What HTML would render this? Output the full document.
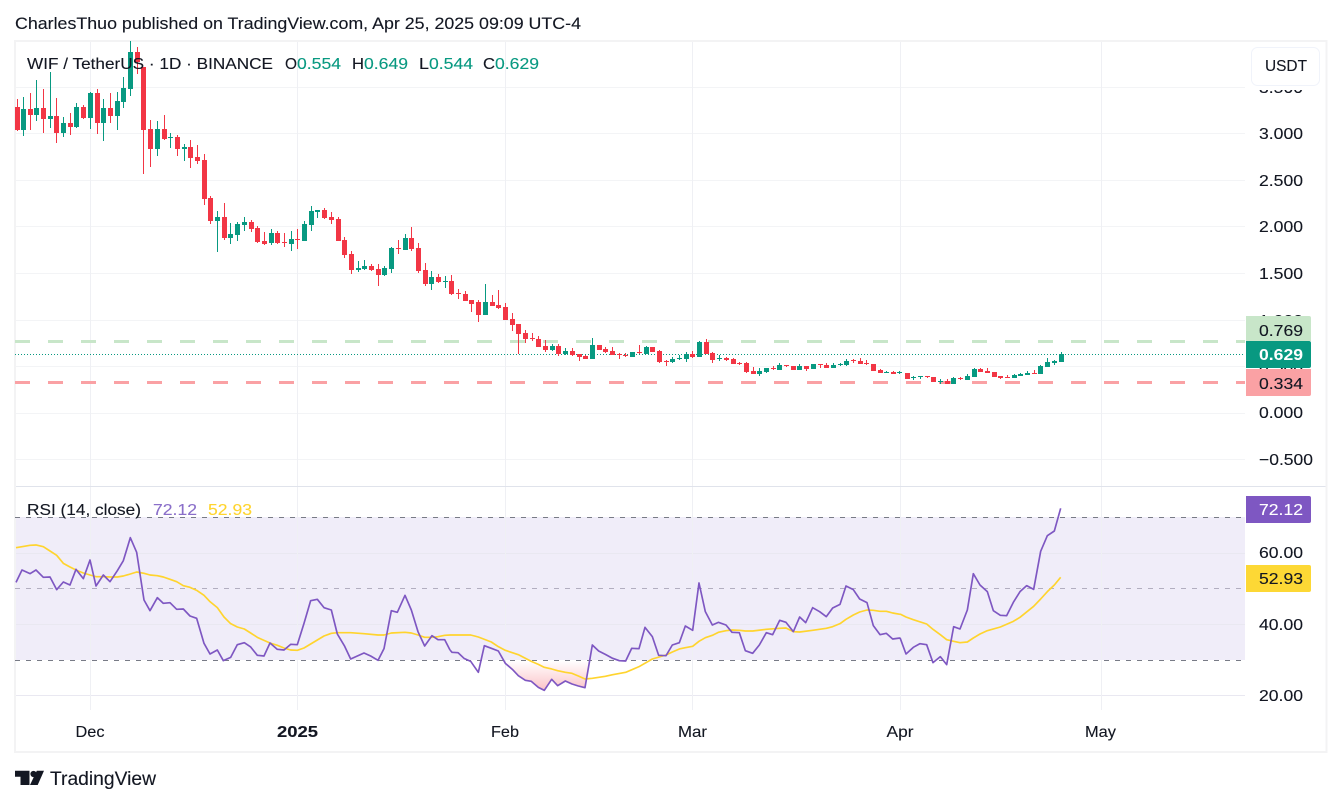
<!DOCTYPE html>
<html><head><meta charset="utf-8"><title>WIF / TetherUS chart</title>
<style>
html,body{margin:0;padding:0;background:#fff;width:1341px;height:805px;overflow:hidden}
svg{display:block}
text{font-family:"Liberation Sans",sans-serif;font-size:16px;fill:#131722;stroke:#131722;stroke-width:.12px}
.g{fill:#089981;stroke:#089981}
</style></head><body>
<svg width="1341" height="805" viewBox="0 0 1341 805" xmlns="http://www.w3.org/2000/svg">
<defs><linearGradient id="pk" x1="0" y1="0" x2="0" y2="1"><stop offset="0" stop-color="#f23645" stop-opacity="0"/><stop offset="1" stop-color="#f23645" stop-opacity=".3"/></linearGradient></defs>
<rect width="1341" height="805" fill="#fff"/>
<text x="15" y="29" style="font-size:17px" textLength="566" lengthAdjust="spacingAndGlyphs">CharlesThuo published on TradingView.com, Apr 25, 2025 09:09 UTC-4</text>

<!-- grid -->
<g shape-rendering="crispEdges">
<rect x="15" y="517" width="1230" height="143" fill="#f0edf9"/>
<path d="M16 87.5H1245M16 133.5H1245M16 180.5H1245M16 226.5H1245M16 273.5H1245M16 320.5H1245M16 366.5H1245M16 413.5H1245M16 459.5H1245" stroke="#f3f4f6" stroke-width="1" fill="none"/>
<path d="M16 553.5H1245M16 624.5H1245M16 695.5H1245" stroke="#e9e8f1" stroke-width="1" fill="none"/>
<path d="M90.5 42V486M297.5 42V486M505.5 42V486M692.5 42V486M900.5 42V486M1101.5 42V486M90.5 487V710M297.5 487V710M505.5 487V710M692.5 487V710M900.5 487V710M1101.5 487V710" stroke="#eff0f4" stroke-width="1" fill="none"/>
<path d="M16 486.5H1326" stroke="#e0e3eb" stroke-width="1"/>
<!-- frame -->
<path d="M15 41H1326.5V752H15Z" fill="none" stroke="#f3f3f4" stroke-width="2"/>
<!-- levels -->
<path d="M15 341.5H1245" stroke="#c8e6c9" stroke-width="3" stroke-dasharray="15 18" fill="none"/>
<path d="M15 382.5H1245" stroke="#faa1a4" stroke-width="3" stroke-dasharray="15 18" fill="none"/>
<path d="M15 354.5H1245" stroke="#089981" stroke-width="1" stroke-dasharray="1 2" fill="none"/>
</g>

<!-- candles -->
<g fill="none" shape-rendering="crispEdges">
<path stroke="#f23645" stroke-width="1" d="M17.5 99V131M30.5 93V130M43.5 89V133M56.5 98V143M70.5 113V135M83.5 105V119M97.5 89V134M110.5 93V123M137.5 47V74M143.5 67V174M150.5 120V167M164.5 115V140M177.5 135V156M190.5 140V168M197.5 145V164M204.5 154V205M210.5 196V224M224.5 203V240M251.5 220V232M257.5 226V243M264.5 232V245M277.5 231V244M284.5 233V247M297.5 229V249M324.5 208V219M331.5 212V224M338.5 217V241M344.5 237V258M351.5 251V274M371.5 264V271M378.5 264V286M398.5 240V254M411.5 227V251M418.5 243V273M425.5 263V286M438.5 274V283M451.5 275V295M458.5 289V299M465.5 291V301M471.5 300V312M478.5 300V322M492.5 295V306M498.5 290V309M505.5 303V320M512.5 313V331M518.5 324V354M525.5 330V343M532.5 333V341M538.5 336V347M545.5 340V352M558.5 344V356M572.5 348V356M579.5 354V361M585.5 355V359M605.5 347V353M612.5 347V355M619.5 353V359M625.5 353V357M639.5 345V354M659.5 350V363M666.5 360V366M692.5 351V358M706.5 339V354M712.5 352V363M726.5 357V361M733.5 358V364M739.5 362V365M746.5 362V373M753.5 367V374M773.5 366V370M786.5 365V367M806.5 366V371M820.5 364V368M826.5 363V368M853.5 359V363M860.5 358V364M866.5 360V365M880.5 369V373M893.5 371V374M927.5 376V378M947.5 379V384M960.5 377V380M980.5 368V372M987.5 368V373M1000.5 376V379M1007.5 375V378M1034.5 370V374"/>
<path stroke="#f23645" stroke-width="5" d="M17.5 107V130M30.5 109V115M43.5 108V119M56.5 116V133M70.5 123V127M83.5 107V118M97.5 93V123M110.5 108V116M137.5 52V62M143.5 67V130M150.5 129V149M164.5 129V139M177.5 137V149M190.5 147V158M197.5 157V161M204.5 160V199M210.5 198V221M224.5 217V238M251.5 222V229M257.5 228V242M264.5 241V244M277.5 233V243M284.5 242V243M297.5 239V240M324.5 210V218M331.5 217V220M338.5 219V241M344.5 240V255M351.5 254V270M371.5 266V270M378.5 269V275M398.5 248V249M411.5 238V249M418.5 248V271M425.5 270V284M438.5 277V282M451.5 281V294M458.5 293V294M465.5 294V301M471.5 300V304M478.5 302V315M492.5 302V306M498.5 305V308M505.5 307V320M512.5 319V325M518.5 324V334M525.5 333V339M532.5 338V339M538.5 339V347M545.5 346V350M558.5 346V354M572.5 351V355M579.5 354V357M585.5 356V359M599.5 345V350M605.5 349V352M612.5 351V355M619.5 354V355M625.5 355V356M639.5 352V353M652.5 347V352M659.5 351V362M666.5 361V362M692.5 354V357M706.5 342V354M712.5 353V360M726.5 358V360M733.5 359V364M739.5 363V364M746.5 363V372M753.5 371V374M773.5 368V369M786.5 365V366M793.5 366V370M806.5 366V369M820.5 364V365M826.5 365V368M853.5 360V361M860.5 361V364M866.5 363V364M873.5 364V371M880.5 370V373M893.5 372V374M907.5 373V379M927.5 376V377M933.5 377V382M947.5 381V384M960.5 378V379M980.5 369V372M987.5 371V373M994.5 372V377M1000.5 376V378M1007.5 377V378M1034.5 373V374"/>
<path stroke="#089981" stroke-width="1" d="M23.5 97V136M36.5 80V121M50.5 72V128M63.5 117V137M76.5 103V128M90.5 92V129M103.5 99V141M117.5 92V130M123.5 77V108M130.5 41V96M157.5 121V156M170.5 133V148M184.5 144V161M217.5 211V252M230.5 223V244M237.5 222V241M244.5 217V231M271.5 229V245M291.5 231V251M304.5 221V241M311.5 206V231M317.5 210V218M358.5 261V272M364.5 260V270M384.5 266V276M391.5 247V273M405.5 234V250M431.5 271V290M445.5 276V288M485.5 284V315M552.5 344V351M565.5 348V355M592.5 338V359M646.5 346V354M672.5 357V363M679.5 355V360M686.5 352V362M699.5 341V357M719.5 355V361M759.5 368V376M766.5 368V373M779.5 363V370M799.5 364V370M833.5 363V368M840.5 363V366M846.5 359V366M886.5 371V373M899.5 371V374M913.5 376V380M920.5 376V379M940.5 379V384M953.5 377V384M967.5 374V380M974.5 368V377M1014.5 374V378M1020.5 373V376M1027.5 371V375M1040.5 365V374M1047.5 358V367M1054.5 360V365M1061.5 352V362"/>
<path stroke="#089981" stroke-width="5" d="M23.5 109V130M36.5 108V115M50.5 116V119M63.5 123V133M76.5 107V127M90.5 93V118M103.5 108V123M117.5 101V116M123.5 88V102M130.5 52V89M157.5 129V149M170.5 137V138M184.5 147V149M217.5 217V221M230.5 234V238M237.5 224V235M244.5 222V225M271.5 233V243M291.5 239V244M304.5 224V241M311.5 211V225M317.5 210V212M358.5 268V270M364.5 266V269M384.5 268V275M391.5 248V269M405.5 238V250M431.5 277V284M445.5 281V282M485.5 302V315M552.5 346V350M565.5 351V354M592.5 345V359M632.5 352V357M646.5 347V354M672.5 359V362M679.5 358V359M686.5 354V359M699.5 342V357M719.5 358V359M759.5 371V374M766.5 368V372M779.5 365V370M799.5 366V370M813.5 364V369M833.5 365V368M840.5 364V365M846.5 361V365M886.5 372V373M899.5 372V373M913.5 377V378M920.5 376V377M940.5 381V382M953.5 378V384M967.5 376V380M974.5 369V377M1014.5 375V378M1020.5 374V376M1027.5 373V375M1040.5 366V374M1047.5 362V367M1054.5 361V363M1061.5 354V362"/>
</g>

<!-- RSI band lines -->
<g shape-rendering="crispEdges" fill="none">
<path d="M15 517.5H1245" stroke="#787b86" stroke-dasharray="5 6"/>
<path d="M15 588.5H1245" stroke="#b2aec0" stroke-dasharray="5 6"/>
<path d="M15 660.5H1245" stroke="#787b86" stroke-dasharray="5 6"/>
</g>

<!-- RSI section 1 -->
<g transform="translate(0,490) scale(.33333)" fill="none" stroke-linejoin="round">
<polyline stroke="#ffd42e" stroke-width="5" points="48,173 66,170 90,166 108,165 130,170 150,183 170,196 190,220 210,231 228,240 250,249 270,255 288,260 310,260 330,261 352,261 370,258 391,252 410,246 432,250 450,255 472,257 490,261 510,268 530,275 550,287 570,292 590,301 612,316 630,335 652,353 672,381 692,401 712,411 733,417 752,429 772,442 792,451 810,459 832,466 852,474 872,480 892,481 912,474 932,462 952,450 972,438 994,430 1012,428 1052,428 1092,431 1134,435 1152,435 1174,429 1215,427 1234,429 1254,435 1274,442 1296,442 1314,440 1334,436 1350,435"/>
<polyline stroke="#7e57c2" stroke-width="5" points="48,277 66,240 90,251 108,240 130,262 150,261 170,299 190,276 210,285 228,238 250,266 270,210 288,288 310,255 330,275 352,242 370,212 391,143 410,187 432,330 450,362 472,323 490,340 510,338 530,358 550,357 570,378 590,385 612,460 630,492 652,480 670,512 692,502 712,464 733,458 752,471 772,496 792,498 810,459 832,478 852,480 872,463 892,464 912,400 932,332 952,328 972,353 994,360 1012,432 1033,467 1052,507 1072,498 1092,489 1112,498 1134,511 1152,476 1174,362 1192,367 1215,316 1234,360 1254,425 1274,468 1296,437 1314,449 1334,449 1350,480"/>
</g>
<!-- RSI section 2 -->
<g transform="translate(450,490) scale(.33333)" fill="none" stroke-linejoin="round">
<polygon fill="url(#pk)" points="160,512 166,520 187,538 205,557 226,571 244,574 265,592 283,601 305,568 323,587 346,573 366,582 385,588 405,593 416,512"/>
<polyline stroke="#ffd42e" stroke-width="5" points="0,435 24,435 62,435 85,441 124,456 145,470 166,481 205,494 244,514 265,523 283,532 305,537 323,542 346,547 366,550 385,558 405,567 427,565 466,559 488,554 527,547 567,530 607,507 648,495 667,486 688,477 706,473 728,469 747,454 766,443 787,436 805,427 828,422 846,420 868,421 886,423 908,423 949,418 989,415 1008,414 1030,425 1049,426 1088,421 1129,415 1148,410 1170,401 1188,388 1210,375 1229,366 1251,360 1270,361 1290,364 1309,364 1328,369 1350,373"/>
<polyline stroke="#7e57c2" stroke-width="5" points="0,480 6,487 24,488 42,505 62,514 85,547 103,467 124,475 145,483 166,520 187,538 205,557 226,571 244,574 265,592 283,601 305,568 323,587 346,573 366,582 385,588 405,593 427,465 446,483 466,493 488,505 508,512 527,513 545,475 567,476 585,412 607,440 626,496 648,497 667,465 688,458 706,408 728,421 747,279 766,365 787,405 805,397 828,405 846,427 868,428 886,482 908,490 928,465 949,428 968,434 989,391 1008,397 1030,425 1049,381 1067,398 1088,353 1109,365 1129,380 1148,354 1170,343 1188,288 1210,299 1229,327 1251,338 1270,407 1290,434 1309,430 1328,447 1350,444"/>
</g>
<!-- RSI section 3 -->
<g transform="translate(890,490) scale(.33333)" fill="none" stroke-linejoin="round">
<polyline stroke="#ffd42e" stroke-width="5" points="30,372 48,381 70,389 110,402 129,418 151,434 170,449 191,454 210,458 232,456 250,444 270,432 292,422 331,411 370,394 390,382 431,349 452,327 472,305 493,285 512,262"/>
<polyline stroke="#7e57c2" stroke-width="5" points="30,443 48,492 70,472 90,461 110,464 129,518 151,500 170,524 191,410 210,417 232,360 250,251 270,285 292,305 310,362 331,376 350,377 370,337 390,305 410,287 431,298 452,184 472,137 493,123 512,55"/>
</g>

<!-- legend -->
<text x="27" y="69" textLength="246" lengthAdjust="spacingAndGlyphs">WIF / TetherUS · 1D · BINANCE</text>
<text x="285" y="69" textLength="12" lengthAdjust="spacingAndGlyphs">O</text><text class="g" x="297" y="69" textLength="44" lengthAdjust="spacingAndGlyphs">0.554</text>
<text x="352" y="69" textLength="12" lengthAdjust="spacingAndGlyphs">H</text><text class="g" x="364" y="69" textLength="44" lengthAdjust="spacingAndGlyphs">0.649</text>
<text x="419" y="69" textLength="10" lengthAdjust="spacingAndGlyphs">L</text><text class="g" x="429" y="69" textLength="44" lengthAdjust="spacingAndGlyphs">0.544</text>
<text x="483" y="69" textLength="12" lengthAdjust="spacingAndGlyphs">C</text><text class="g" x="495" y="69" textLength="44" lengthAdjust="spacingAndGlyphs">0.629</text>
<text x="27" y="515" textLength="114" lengthAdjust="spacingAndGlyphs">RSI (14, close)</text>
<text x="153" y="515" textLength="44" lengthAdjust="spacingAndGlyphs" style="fill:#8a6fc9;stroke:#8a6fc9">72.12</text>
<text x="208" y="515" textLength="44" lengthAdjust="spacingAndGlyphs" style="fill:#ffd42e;stroke:#ffd42e">52.93</text>

<!-- price axis -->
<g>
<text x="1259" y="93" textLength="44" lengthAdjust="spacingAndGlyphs">3.500</text>
<text x="1259" y="139" textLength="44" lengthAdjust="spacingAndGlyphs">3.000</text>
<text x="1259" y="186" textLength="44" lengthAdjust="spacingAndGlyphs">2.500</text>
<text x="1259" y="232" textLength="44" lengthAdjust="spacingAndGlyphs">2.000</text>
<text x="1259" y="279" textLength="44" lengthAdjust="spacingAndGlyphs">1.500</text>
<text x="1259" y="326" textLength="44" lengthAdjust="spacingAndGlyphs">1.000</text>
<text x="1259" y="372" textLength="44" lengthAdjust="spacingAndGlyphs">0.500</text>
<text x="1259" y="418" textLength="44" lengthAdjust="spacingAndGlyphs">0.000</text>
<text x="1259" y="465" textLength="54" lengthAdjust="spacingAndGlyphs">−0.500</text>
<text x="1259" y="558" textLength="44" lengthAdjust="spacingAndGlyphs">60.00</text>
<text x="1259" y="630" textLength="44" lengthAdjust="spacingAndGlyphs">40.00</text>
<text x="1259" y="701" textLength="44" lengthAdjust="spacingAndGlyphs">20.00</text>
</g>

<!-- USDT button -->
<rect x="1247" y="44" width="76" height="46" fill="#fff"/>
<rect x="1251.5" y="47.5" width="68" height="38" rx="6" fill="#fff" stroke="#f0f3fa"/>
<text x="1265" y="71" textLength="42" lengthAdjust="spacingAndGlyphs">USDT</text>

<!-- price labels -->
<path d="M1246 316H1309a2 2 0 0 1 2 2V341H1246Z" fill="#c8e6c9"/>
<text x="1259" y="336" textLength="44" lengthAdjust="spacingAndGlyphs">0.769</text>
<path d="M1246 369H1311V394a2 2 0 0 1-2 2H1246Z" fill="#faa1a4"/>
<text x="1259" y="389" textLength="44" lengthAdjust="spacingAndGlyphs">0.334</text>
<path d="M1246 341H1309a2 2 0 0 1 2 2V366a2 2 0 0 1-2 2H1246Z" fill="#089981"/>
<text x="1259" y="360" textLength="44" lengthAdjust="spacingAndGlyphs" style="fill:#fff;stroke:#fff;font-weight:bold;stroke-width:0">0.629</text>
<path d="M1246 496H1309a2 2 0 0 1 2 2V521a2 2 0 0 1-2 2H1246Z" fill="#7e57c2"/>
<text x="1259" y="515" textLength="44" lengthAdjust="spacingAndGlyphs" style="fill:#fff;stroke:#fff">72.12</text>
<path d="M1246 565H1309a2 2 0 0 1 2 2V590a2 2 0 0 1-2 2H1246Z" fill="#fdd835"/>
<text x="1259" y="584" textLength="44" lengthAdjust="spacingAndGlyphs">52.93</text>

<!-- time axis -->
<g>
<text x="75.5" y="737" textLength="29" lengthAdjust="spacingAndGlyphs">Dec</text>
<text x="277" y="737" textLength="41" lengthAdjust="spacingAndGlyphs" style="font-weight:bold">2025</text>
<text x="491" y="737" textLength="28" lengthAdjust="spacingAndGlyphs">Feb</text>
<text x="678" y="737" textLength="29" lengthAdjust="spacingAndGlyphs">Mar</text>
<text x="886.5" y="737" textLength="27" lengthAdjust="spacingAndGlyphs">Apr</text>
<text x="1085" y="737" textLength="31" lengthAdjust="spacingAndGlyphs">May</text>
</g>

<!-- logo -->
<g fill="#131722">
<path d="M15 770.7H29.5V785H20.5V776.7H15Z"/><circle cx="33.5" cy="774" r="3.1"/><path d="M36.8 770.7H44L37.7 785H30Z"/>
</g>
<text x="50" y="785" textLength="106" lengthAdjust="spacingAndGlyphs" style="font-size:19px">TradingView</text>
</svg>
</body></html>
